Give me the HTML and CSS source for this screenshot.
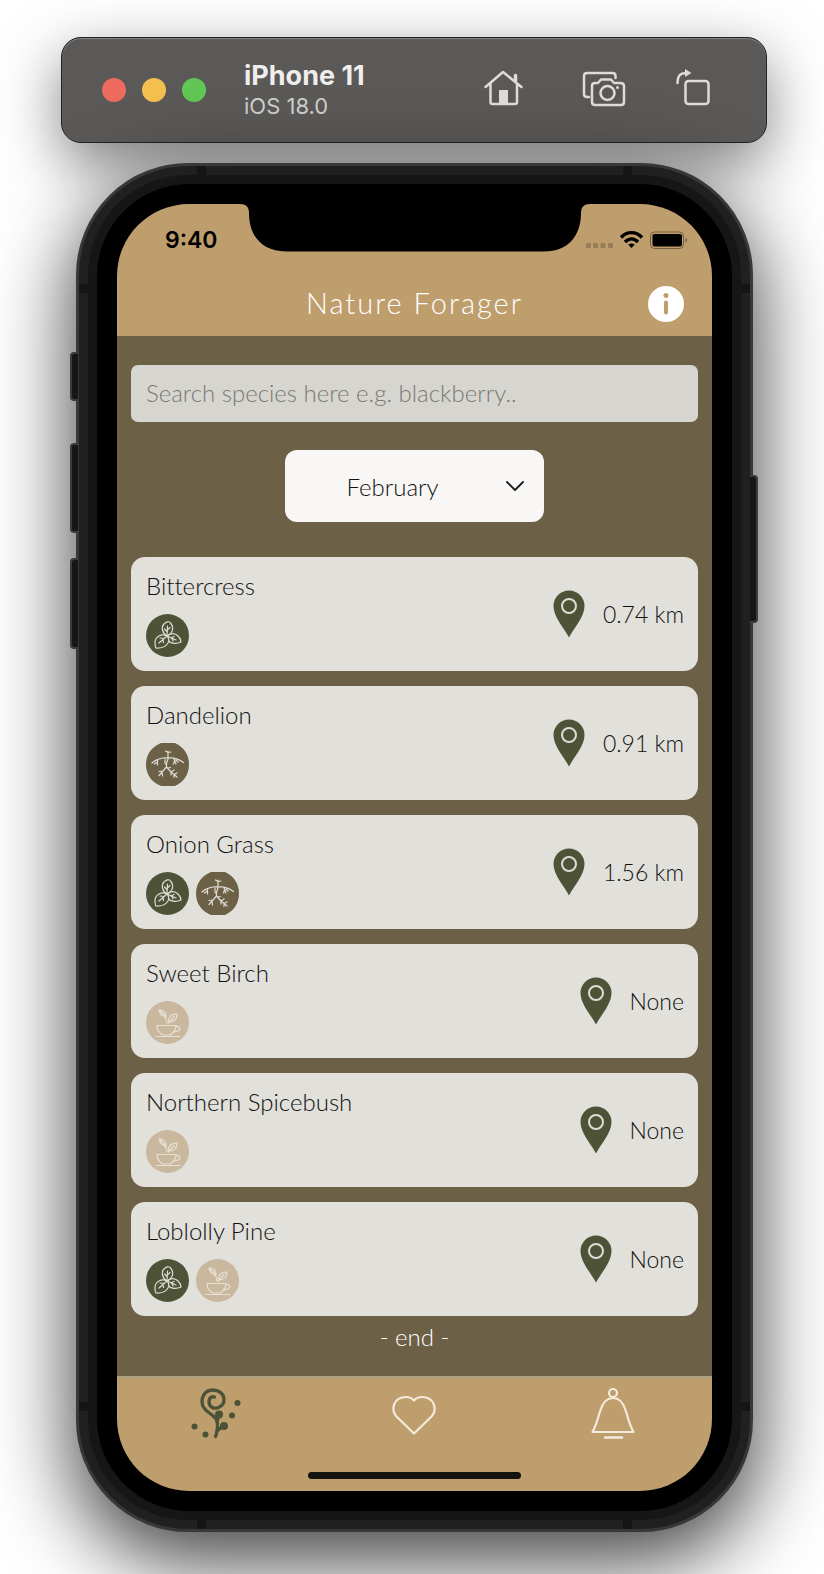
FILE: index.html
```html
<!DOCTYPE html>
<html lang="en">
<head>
<meta charset="utf-8">
<meta name="viewport" content="width=device-width, initial-scale=1">
<title>Nature Forager</title>
<link rel="stylesheet" href="styles.css">
</head>
<body>
<svg class="sprite" aria-hidden="true">
  <symbol id="leaf" viewBox="0 0 43 43">
    <circle cx="21.500" cy="21.500" r="21.500" fill="#4e5338"/>
    <g fill="none" stroke="#deddd5" stroke-width="1.200" stroke-linecap="round" stroke-linejoin="round">
      <path d="M21 22C16 19 15 13 18 10C20 7.500 23 7 24.500 9C28 13 27.500 19 21 22Z"/>
      <path d="M21 22C15 19 9.500 23 9 28C9 31 9 33 10 34C15 34.500 20 32.500 22 29C23 27 23 24 21 22Z"/>
      <path d="M21 22C25 19 29 19 32 22C34 24 35 26 35 28C31 30 25 30 22.500 27"/>
      <path d="M21 22L21.500 12M21.300 18L18.500 15M21.400 16L24 13.500M21 22L13 29M18 24.500L14 24M17 25.500L17.500 28.500M21 22L30 26M25 24L28 22.500M26 24.500L27 27"/>
    </g>
  </symbol>
  <symbol id="root" viewBox="0 0 43 43">
    <path d="M15 0H29C38 4 43 12 43 21.500S38 39 29 43H15C5 39 0 31 0 21.500S5 4 15 0Z" fill="#6c6146"/>
    <g fill="none" stroke="#deddd5" stroke-width="1.200" stroke-linecap="round" stroke-linejoin="round">
      <path d="M22 8V16L20.500 20L20.500 24M19.500 8L22 9.500L25 9M6 20C14 13 29 13 37.500 19.500"/>
      <path d="M11.500 17V22M11.500 19L8.500 21M19 16V20L20.500 22M28 16L30 21M30 17L32 19M28.500 18L27.500 21"/>
      <path d="M20.500 24L13 32.500M17 28L13 28.500M16 29.500L16.500 33M20.500 24L25 29L31 34M25 29V32M25 29L28 27M28 31.500V34.500M28 31.500L31 30M22 25L24.500 24.500"/>
    </g>
  </symbol>
  <symbol id="cup" viewBox="0 0 43 43">
    <circle cx="21.500" cy="21.500" r="21.500" fill="#c9b89e"/>
    <g fill="none" stroke="#e7e1d5" stroke-width="1.200" stroke-linecap="round" stroke-linejoin="round">
      <path d="M11 24.500H30C30 29 27 32 24.500 34H17C13 32 11 29 11 24.500ZM30 25.500C35 25 36 30 28 31M10 35.500H34"/>
      <path d="M21 22C21 19 20 17 18 15C14 15 14 11 13 9C17 9 20 11 20 16M14 10L19 15"/>
      <path d="M22.500 22C22 16 25 13 31 13C31 19 27 21 22.500 21M22.500 22L28 15.500"/>
    </g>
  </symbol>
  <symbol id="pin" viewBox="0 0 32 48">
    <path d="M16 47.500C11 38 .5 27 .5 16A15.500 15.500 0 0 1 31.500 16C31.500 27 21 38 16 47.500Z" fill="#4e5338"/>
    <circle cx="16" cy="16" r="7" fill="none" stroke="#deddd5" stroke-width="2"/>
  </symbol>
</svg>

<header class="toolbar">
  <div class="lights"><i class="light red"></i><i class="light amber"></i><i class="light green"></i></div>
  <div class="device"><strong class="device-name">iPhone 11</strong><span class="device-os">iOS 18.0</span></div>
  <div class="tools">
    <button class="tool" aria-label="Home">
      <svg width="48" height="44" viewBox="0 0 48 44" fill="none" stroke="#dddcda" stroke-width="2.500" stroke-linecap="round" stroke-linejoin="round"><path d="M1.500 19L19 4L37.500 19M6.500 16V34Q6.500 36 8.500 36H31Q33 36 33 34V16"/><path d="M15 22H24V36H15Z" fill="#dddcda" stroke="none"/><path d="M31.500 7.500V13" stroke-width="3.500"/></svg>
    </button>
    <button class="tool" aria-label="Screenshot">
      <svg width="44" height="44" viewBox="0 0 44 44" fill="none" stroke="#dddcda" stroke-width="2.500" stroke-linecap="round" stroke-linejoin="round"><path d="M33.500 10V8Q33.500 5 30.500 5H5Q2 5 2 8V26Q2 29 5 29H7"/><path d="M13 15H16L19 11.500H29L32 15H38Q42 15 42 18V34Q42 37 39 37H13Q10 37 10 34V18Q10 15 13 15Z"/><circle cx="25.500" cy="25" r="7"/><circle cx="35.500" cy="19.500" r="1.500" fill="#dddcda" stroke="none"/></svg>
    </button>
    <button class="tool" aria-label="Rotate">
      <svg width="34" height="44" viewBox="0 0 34 44" fill="none" stroke="#dddcda" stroke-width="2.500" stroke-linecap="round"><rect x="9.500" y="13" width="23" height="23" rx="3"/><path d="M1.500 15C1.500 8 4 5 10 5"/><path d="M9 1L15.500 5L9 9Z" fill="#dddcda" stroke="none"/></svg>
    </button>
  </div>
</header>

<main class="phone">
  <i class="key mute"></i><i class="key up"></i><i class="key down"></i><i class="key power"></i>
  <div class="rim"><div class="bezel"><div class="screen">
    <svg class="notch" width="350" height="48" viewBox="0 0 350 48"><path d="M0 0C6 0 9 3 9 9C9 32 22 47.500 46 47.500H304C328 47.500 341 32 341 9C341 3 344 0 350 0Z"/></svg>
    <div class="status">
      <span class="time">9:40</span>
      <svg width="102" height="20" viewBox="0 0 102 20"><g fill="#977d59"><rect y="13" width="5" height="5" rx="1"/><rect x="7" y="13" width="5" height="5" rx="1"/><rect x="14.500" y="13" width="5" height="5" rx="1"/><rect x="22" y="13" width="5" height="5" rx="1"/></g><g fill="none" stroke="#000" stroke-width="3.400"><path d="M35 7.500C41 1 50 1 56 7.500M39 12C43 8 48 8 52 12"/></g><path d="M42.300 14.800Q45.500 12 48.700 14.800L45.500 18Z"/><rect x="64.500" y="2" width="33" height="16.500" rx="4" fill="none" stroke="#725d3f"/><rect x="66.500" y="4" width="29.500" height="12.500" rx="2"/><path d="M99.500 8C101.500 8.500 101.500 12 99.500 12.500Z" fill="#725d3f"/></svg>
    </div>
    <div class="titlebar">
      <h1 class="title">Nature Forager</h1>
      <button class="info" aria-label="Information"><svg width="36" height="36" viewBox="0 0 36 36"><circle cx="18" cy="18" r="18" fill="#fff"/><circle cx="18" cy="9.500" r="2.500" fill="#bf9e6d"/><path d="M18 16.500V26.500" stroke="#bf9e6d" stroke-width="4" stroke-linecap="round"/></svg></button>
    </div>
    <section class="content">
      <input class="search" type="text" aria-label="Search species" placeholder="Search species here e.g. blackberry..">
      <div class="month">
        <select class="month-select" aria-label="Month"><option>February</option></select>
        <svg class="chevron" width="20" height="12" viewBox="0 0 20 12" fill="none" stroke="#1b1b1b" stroke-width="1.800" stroke-linecap="round" stroke-linejoin="round"><path d="M2 2L10 10L18 2"/></svg>
      </div>
      <ul class="cards">
        <li class="card"><div><h2 class="name">Bittercress</h2><div class="uses"><svg class="use"><use href="#leaf"/></svg></div></div><svg class="pin"><use href="#pin"/></svg><span class="distance">0.74 km</span></li>
        <li class="card"><div><h2 class="name">Dandelion</h2><div class="uses"><svg class="use"><use href="#root"/></svg></div></div><svg class="pin"><use href="#pin"/></svg><span class="distance">0.91 km</span></li>
        <li class="card"><div><h2 class="name">Onion Grass</h2><div class="uses"><svg class="use"><use href="#leaf"/></svg><svg class="use"><use href="#root"/></svg></div></div><svg class="pin"><use href="#pin"/></svg><span class="distance">1.56 km</span></li>
        <li class="card"><div><h2 class="name">Sweet Birch</h2><div class="uses"><svg class="use"><use href="#cup"/></svg></div></div><svg class="pin"><use href="#pin"/></svg><span class="distance">None</span></li>
        <li class="card"><div><h2 class="name">Northern Spicebush</h2><div class="uses"><svg class="use"><use href="#cup"/></svg></div></div><svg class="pin"><use href="#pin"/></svg><span class="distance">None</span></li>
        <li class="card"><div><h2 class="name">Loblolly Pine</h2><div class="uses"><svg class="use"><use href="#leaf"/></svg><svg class="use"><use href="#cup"/></svg></div></div><svg class="pin"><use href="#pin"/></svg><span class="distance">None</span></li>
      </ul>
      <p class="end">- end -</p>
    </section>
    <nav class="tabs">
      <button class="tab" aria-label="Forage"><svg width="52" height="54" viewBox="0 0 52 54"><g fill="none" stroke="#4c5238" stroke-width="3.300" stroke-linecap="round"><path d="M24.500 11C20 9.500 17.500 15 20 19.500C24 25 34 21 34 14C34 7 28 4 23 4C16 4 12 9 12 16C12 27 28 28 27.500 38Q27.500 46 25.500 50.500"/><path d="M27 36L29 29M27 45L33 40"/></g><g fill="#4c5238"><circle cx="29" cy="28.500" r="4"/><circle cx="34" cy="40" r="4"/><circle cx="47.500" cy="17" r="3"/><circle cx="42" cy="29.500" r="3"/><circle cx="4.500" cy="40.500" r="3"/><circle cx="15.500" cy="48.500" r="3"/></g></svg></button>
      <button class="tab" aria-label="Favourites"><svg width="44" height="54" viewBox="0 0 44 54" fill="none" stroke="#f4ebdc" stroke-width="2.200" stroke-linejoin="round"><path d="M22 47.500L4 30C-1 24 1 11 14 11Q19 11 22 14.500Q25 11 30 11C43 11 45 24 40 30Z"/></svg></button>
      <button class="tab" aria-label="Alerts"><svg width="46" height="54" viewBox="0 0 46 54" fill="none" stroke="#f4ebdc" stroke-width="2.200" stroke-linejoin="round" stroke-linecap="round"><circle cx="23" cy="7" r="4"/><path d="M2.500 46C7 38 8 31 10.500 24C13 16 17 12 23 12S33 16 35.500 24C38 31 39 38 43.500 46Z"/><path d="M15 51.500H32" stroke-width="2.500"/></svg></button>
    </nav>
    <div class="home-area"><i class="home-bar"></i></div>
  </div></div></div>
</main>
</body>
</html>
```
FILE: styles.css
```css
* { box-sizing: border-box; }

body {
  margin: 0;
  padding: 37px 57px 42px 61px;
  background: #fff;
  font-family: Lato, "Open Sans", sans-serif;
  font-weight: 300;
  font-variant-ligatures: none;
  color: #111;
}

button { border: 0; padding: 0; background: none; }
svg { display: block; }
.sprite { display: none; }

.toolbar {
  display: flex;
  align-items: center;
  height: 106px;
  padding: 0 56px 0 40px;
  border: 1px solid #222;
  border-radius: 20px;
  background: #5a5957;
  box-shadow: inset 0 1px 1px #858585, 0 20px 60px rgba(0, 0, 0, 0.5);
  font-family: Inter, sans-serif;
}
.lights { display: flex; gap: 16px; }
.light { width: 24px; height: 24px; border-radius: 50%; }
.red { background: #ed6a5f; }
.amber { background: #f5bf50; }
.green { background: #62c655; }
.device { display: flex; flex-direction: column; margin-left: 38px; }
.device-name { font-size: 27px; line-height: 32px; font-weight: 700; color: #efeeed; }
.device-os { font-size: 22px; line-height: 28px; font-weight: 400; color: #cfcecc; }
.tools { display: flex; gap: 50px; margin-left: auto; }

.phone {
  position: relative;
  margin: 20px 14px 0 15px;
  padding: 9px;
  border: 3px solid #383838;
  border-radius: 112px;
  background:
    linear-gradient(90deg, transparent 118px, #151515 118px 127px, transparent 127px calc(100% - 127px), #151515 calc(100% - 127px) calc(100% - 118px), transparent 0),
    linear-gradient(transparent 118px, #151515 118px 127px, transparent 127px calc(100% - 127px), #151515 calc(100% - 127px) calc(100% - 118px), transparent 0),
    #202020;
  box-shadow: 0 26px 80px 4px rgba(0, 0, 0, 0.74);
}
.rim { padding: 9px; border-radius: 100px; background: #161616; }
.bezel { padding: 20px; border-radius: 92px; background: #000; }
.screen {
  position: relative;
  overflow: hidden;
  border-radius: 72px;
  background: #bf9e6d;
}

.key {
  position: absolute;
  left: -9px;
  width: 8px;
  border: solid #3c3c3c;
  border-width: 2px 0 2px 2px;
  border-radius: 4px 0 0 4px;
  background: #161616;
}
.mute { top: 186px; height: 49px; }
.up { top: 277px; height: 90px; }
.down { top: 392px; height: 91px; }
.power {
  top: 309px;
  right: -8px;
  left: auto;
  height: 148px;
  border-width: 2px 2px 2px 0;
  border-radius: 0 4px 4px 0;
}

.notch { position: absolute; top: 0; left: 0; right: 0; margin: 0 auto; }
.status {
  display: flex;
  align-items: center;
  justify-content: space-between;
  height: 67px;
  padding: 5px 24px 0 48px;
}
.time { font: 600 23px/28px Inter, sans-serif; color: #000; }
.titlebar {
  display: grid;
  grid-template-columns: 1fr auto 1fr;
  align-items: center;
  height: 65px;
  padding: 0 28px;
}
.title {
  grid-column: 2;
  margin: 0;
  padding-bottom: 2px;
  font-size: 29px;
  line-height: 36px;
  font-weight: 300;
  letter-spacing: 2px;
  color: #fff;
}
.info { justify-self: end; }

.content {
  display: flex;
  flex-direction: column;
  padding: 29px 14px 18px;
  background: #6c6146;
}
.search {
  width: 100%;
  height: 57px;
  padding: 0 15px 2px;
  border: 0;
  border-radius: 7px;
  background: #d6d5cf;
  font: inherit;
  font-size: 24px;
  color: #111;
}
.search::placeholder { color: #7a7974; opacity: 1; }
.month {
  display: grid;
  align-items: center;
  align-self: center;
  width: 259px;
  margin: 28px 0 35px;
}
.month-select {
  grid-area: 1 / 1;
  height: 72px;
  padding: 0 44px 0 0;
  border: 0;
  border-radius: 12px;
  appearance: none;
  background: #f8f7f5;
  font: inherit;
  font-size: 24px;
  color: #111;
  text-align: center;
  text-align-last: center;
}
.chevron { grid-area: 1 / 1; justify-self: end; margin-right: 19px; pointer-events: none; }

.cards {
  display: flex;
  flex-direction: column;
  gap: 15px;
  margin: 0;
  padding: 0;
  list-style: none;
}
.card {
  display: grid;
  grid-template-columns: 1fr auto auto;
  align-items: center;
  padding: 14px 14px 14px 15px;
  border-radius: 14px;
  background: #e1e0da;
}
.name { margin: 0 0 13px; font-size: 24px; line-height: 30px; font-weight: 300; }
.uses { display: flex; gap: 7px; }
.use { width: 43px; height: 43px; }
.pin { width: 32px; height: 48px; margin-right: 18px; }
.distance { font-size: 23px; line-height: 32px; }
.end { margin: 0; font-size: 24px; line-height: 42px; text-align: center; color: #fff; }

.tabs {
  display: grid;
  grid-template-columns: repeat(3, 1fr);
  padding: 8px 0 10px;
  border-top: 2px solid #aaa082;
}
.tab { display: grid; justify-items: center; }
.home-area { display: flex; justify-content: center; height: 41px; padding-top: 22px; }
.home-bar { width: 213px; height: 7px; border-radius: 4px; background: #141310; }
```
